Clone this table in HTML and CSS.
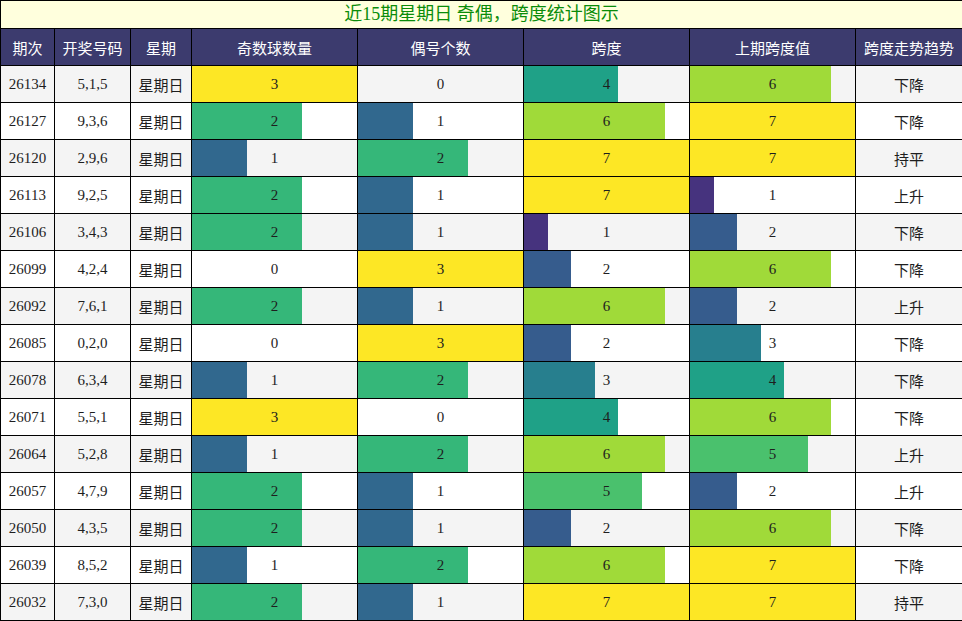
FILE: index.html
```html
<!DOCTYPE html>
<html lang="zh">
<head>
<meta charset="utf-8">
<title>近15期星期日 奇偶，跨度统计图示</title>
<link rel="stylesheet" href="styles.css">
</head>
<body>
<table class="stat">
  <colgroup>
    <col class="c-id"><col class="c-num"><col class="c-day">
    <col class="c-bar"><col class="c-bar"><col class="c-bar"><col class="c-bar">
    <col class="c-trend">
  </colgroup>
  <thead>
    <tr class="title-row"><th colspan="8" class="title">近15期星期日 奇偶，跨度统计图示</th></tr>
    <tr class="head-row">
      <th>期次</th><th>开奖号码</th><th>星期</th><th>奇数球数量</th><th>偶号个数</th><th>跨度</th><th>上期跨度值</th><th>跨度走势趋势</th>
    </tr>
  </thead>
  <tbody>
    <tr><td class="num">26134</td><td class="num">5,1,5</td><td class="cjk">星期日</td><td class="bar v3" style="--w:100%">3</td><td class="bar" style="--w:0%">0</td><td class="bar s4" style="--w:57.14%">4</td><td class="bar s6" style="--w:85.71%">6</td><td class="cjk">下降</td></tr>
    <tr><td class="num">26127</td><td class="num">9,3,6</td><td class="cjk">星期日</td><td class="bar v2" style="--w:66.67%">2</td><td class="bar v1" style="--w:33.33%">1</td><td class="bar s6" style="--w:85.71%">6</td><td class="bar s7" style="--w:100%">7</td><td class="cjk">下降</td></tr>
    <tr><td class="num">26120</td><td class="num">2,9,6</td><td class="cjk">星期日</td><td class="bar v1" style="--w:33.33%">1</td><td class="bar v2" style="--w:66.67%">2</td><td class="bar s7" style="--w:100%">7</td><td class="bar s7" style="--w:100%">7</td><td class="cjk">持平</td></tr>
    <tr><td class="num">26113</td><td class="num">9,2,5</td><td class="cjk">星期日</td><td class="bar v2" style="--w:66.67%">2</td><td class="bar v1" style="--w:33.33%">1</td><td class="bar s7" style="--w:100%">7</td><td class="bar s1" style="--w:14.29%">1</td><td class="cjk">上升</td></tr>
    <tr><td class="num">26106</td><td class="num">3,4,3</td><td class="cjk">星期日</td><td class="bar v2" style="--w:66.67%">2</td><td class="bar v1" style="--w:33.33%">1</td><td class="bar s1" style="--w:14.29%">1</td><td class="bar s2" style="--w:28.57%">2</td><td class="cjk">下降</td></tr>
    <tr><td class="num">26099</td><td class="num">4,2,4</td><td class="cjk">星期日</td><td class="bar" style="--w:0%">0</td><td class="bar v3" style="--w:100%">3</td><td class="bar s2" style="--w:28.57%">2</td><td class="bar s6" style="--w:85.71%">6</td><td class="cjk">下降</td></tr>
    <tr><td class="num">26092</td><td class="num">7,6,1</td><td class="cjk">星期日</td><td class="bar v2" style="--w:66.67%">2</td><td class="bar v1" style="--w:33.33%">1</td><td class="bar s6" style="--w:85.71%">6</td><td class="bar s2" style="--w:28.57%">2</td><td class="cjk">上升</td></tr>
    <tr><td class="num">26085</td><td class="num">0,2,0</td><td class="cjk">星期日</td><td class="bar" style="--w:0%">0</td><td class="bar v3" style="--w:100%">3</td><td class="bar s2" style="--w:28.57%">2</td><td class="bar s3" style="--w:42.86%">3</td><td class="cjk">下降</td></tr>
    <tr><td class="num">26078</td><td class="num">6,3,4</td><td class="cjk">星期日</td><td class="bar v1" style="--w:33.33%">1</td><td class="bar v2" style="--w:66.67%">2</td><td class="bar s3" style="--w:42.86%">3</td><td class="bar s4" style="--w:57.14%">4</td><td class="cjk">下降</td></tr>
    <tr><td class="num">26071</td><td class="num">5,5,1</td><td class="cjk">星期日</td><td class="bar v3" style="--w:100%">3</td><td class="bar" style="--w:0%">0</td><td class="bar s4" style="--w:57.14%">4</td><td class="bar s6" style="--w:85.71%">6</td><td class="cjk">下降</td></tr>
    <tr><td class="num">26064</td><td class="num">5,2,8</td><td class="cjk">星期日</td><td class="bar v1" style="--w:33.33%">1</td><td class="bar v2" style="--w:66.67%">2</td><td class="bar s6" style="--w:85.71%">6</td><td class="bar s5" style="--w:71.43%">5</td><td class="cjk">上升</td></tr>
    <tr><td class="num">26057</td><td class="num">4,7,9</td><td class="cjk">星期日</td><td class="bar v2" style="--w:66.67%">2</td><td class="bar v1" style="--w:33.33%">1</td><td class="bar s5" style="--w:71.43%">5</td><td class="bar s2" style="--w:28.57%">2</td><td class="cjk">上升</td></tr>
    <tr><td class="num">26050</td><td class="num">4,3,5</td><td class="cjk">星期日</td><td class="bar v2" style="--w:66.67%">2</td><td class="bar v1" style="--w:33.33%">1</td><td class="bar s2" style="--w:28.57%">2</td><td class="bar s6" style="--w:85.71%">6</td><td class="cjk">下降</td></tr>
    <tr><td class="num">26039</td><td class="num">8,5,2</td><td class="cjk">星期日</td><td class="bar v1" style="--w:33.33%">1</td><td class="bar v2" style="--w:66.67%">2</td><td class="bar s6" style="--w:85.71%">6</td><td class="bar s7" style="--w:100%">7</td><td class="cjk">下降</td></tr>
    <tr><td class="num">26032</td><td class="num">7,3,0</td><td class="cjk">星期日</td><td class="bar v2" style="--w:66.67%">2</td><td class="bar v1" style="--w:33.33%">1</td><td class="bar s7" style="--w:100%">7</td><td class="bar s7" style="--w:100%">7</td><td class="cjk">持平</td></tr>
  </tbody>
</table>
</body>
</html>
```
FILE: styles.css
```css
html, body {
  margin: 0;
  padding: 0;
  background: #ffffff;
}

.stat {
  width: 962px;
  table-layout: fixed;
  border-collapse: collapse;
  font-family: "Liberation Serif", "Noto Sans CJK SC", serif;
  color: #1e1e1e;
}

.c-id { width: 54px; }
.c-num { width: 76px; }
.c-day { width: 61px; }
.c-bar { width: 166px; }
.c-trend { width: 107px; }

.stat th,
.stat td {
  border: 1px solid #000000;
  padding: 0;
  text-align: center;
  vertical-align: middle;
}

.title {
  height: 27px;
  background: #ffffdd;
  color: #0a8c0a;
  font-size: 18px;
  font-weight: normal;
  line-height: 27px;
}

.head-row th {
  height: 36px;
  background: #3c3b6e;
  color: #ffffff;
  font-family: "Noto Sans CJK SC", sans-serif;
  font-size: 15px;
  font-weight: normal;
}

.stat td {
  height: 36px;
  font-size: 15px;
  line-height: 20px;
}

.stat tbody tr:nth-child(odd) td { background-color: #f4f4f4; }
.stat tbody tr:nth-child(even) td { background-color: #ffffff; }

.stat td.cjk {
  font-family: "Noto Sans CJK SC", sans-serif;
  font-size: 15px;
  padding-top: 2px;
  height: 34px;
}

.stat td.v1 { --c: #31688e; }
.stat td.v2 { --c: #35b779; }
.stat td.v3 { --c: #fde725; }

.stat td.s1 { --c: #46337e; }
.stat td.s2 { --c: #365c8d; }
.stat td.s3 { --c: #277f8e; }
.stat td.s4 { --c: #1fa187; }
.stat td.s5 { --c: #4ac16d; }
.stat td.s6 { --c: #a0da39; }
.stat td.s7 { --c: #fde725; }

.stat td.bar {
  background-image: linear-gradient(to right, var(--c, transparent) 0, var(--c, transparent) var(--w), transparent var(--w));
  background-repeat: no-repeat;
}
```
